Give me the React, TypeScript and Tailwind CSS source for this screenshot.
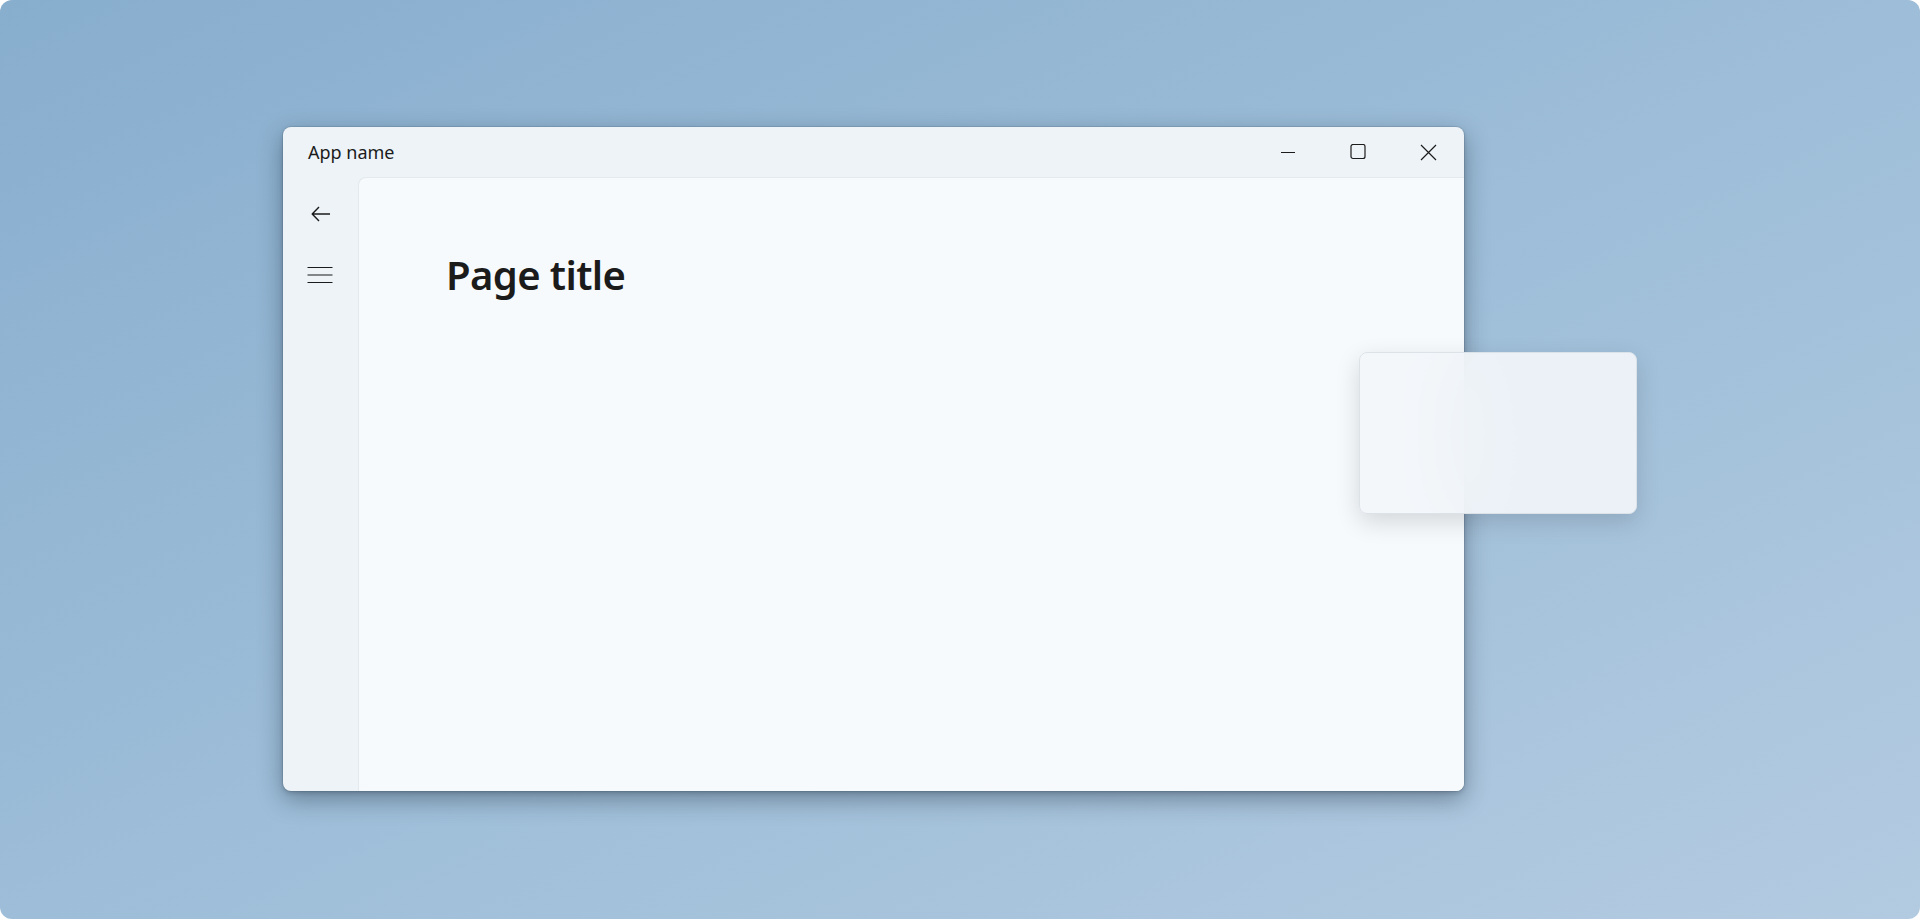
import React from 'react';

const font = { fontFamily: '"Noto Sans", "Open Sans", sans-serif' };

function WindowControls() {
  return (
    <div className="flex h-full">
      <button className="flex h-full w-[70px] items-center justify-center pr-[2px]">
        <svg width="16" height="16" viewBox="0 0 16 16" fill="none">
          <path d="M1 8.5h14" stroke="#1b1b1b" strokeWidth="1" />
        </svg>
      </button>
      <button className="flex h-full w-[70px] items-center justify-center pr-[2px]">
        <svg width="16" height="16" viewBox="0 0 16 16" fill="none">
          <rect x="1" y="0.5" width="14" height="14" rx="2" stroke="#1b1b1b" strokeWidth="1.2" />
        </svg>
      </button>
      <button className="flex h-full w-[70px] items-center justify-center pr-[1px]">
        <svg width="17" height="17" viewBox="0 0 17 17" fill="none">
          <path d="M1 1l15 15M16 1L1 16" stroke="#1b1b1b" strokeWidth="1.2" />
        </svg>
      </button>
    </div>
  );
}

export default function App() {
  return (
    <div className="h-[919px] w-[1920px] bg-white" style={font}>
      <div className="relative h-full w-full overflow-hidden rounded-[12px] bg-gradient-to-br from-[#88aece] via-[#9dbdd8] to-[#b3cbe1]">
        {/* app window */}
        <div className="absolute left-[283px] top-[127px] flex h-[664px] w-[1181px] flex-col overflow-hidden rounded-[8px] bg-[#edf3f7] shadow-[0_8px_24px_rgba(20,35,50,0.4),0_2px_4px_rgba(20,35,50,0.2),0_0_0_1px_rgba(0,0,0,0.08)]">
          <div className="flex h-[50px] shrink-0 items-center justify-between">
            <span className="pl-[25px] text-[18px] text-[#1b1b1b]">App name</span>
            <WindowControls />
          </div>
          <div className="flex min-h-0 flex-1">
            <div className="flex w-[75px] shrink-0 flex-col items-center gap-[44px] pt-[29px]">
              <svg width="20" height="16" viewBox="0 0 20 16" fill="none">
                <path d="M19 8H1.5M8 1L1.2 8L8 15" stroke="#1b1b1b" strokeWidth="1.4" strokeLinejoin="round" />
              </svg>
              <svg width="26" height="18" viewBox="0 0 26 18" fill="none" className="-ml-[1px]">
                <path d="M0.5 1.5h25M0.5 9h25M0.5 16.5h25" stroke="#1b1b1b" strokeWidth="1.2" />
              </svg>
            </div>
            <div className="flex-1 rounded-tl-[8px] border-l border-t border-[#e3e9ed] bg-[#f7fafc] pl-[87px] pt-[69px]">
              <h1 className="text-[40px] font-semibold leading-[56px] tracking-[-0.6px] text-[#1b1b1b]">Page title</h1>
            </div>
          </div>
        </div>
        {/* flyout card */}
        <div className="absolute left-[1359px] top-[352px] h-[162px] w-[278px] rounded-[8px] border border-[#dbe2e8] bg-[rgba(243,246,249,0.9)] shadow-[0_8px_24px_rgba(0,0,0,0.14)] backdrop-blur-2xl" />
      </div>
    </div>
  );
}
